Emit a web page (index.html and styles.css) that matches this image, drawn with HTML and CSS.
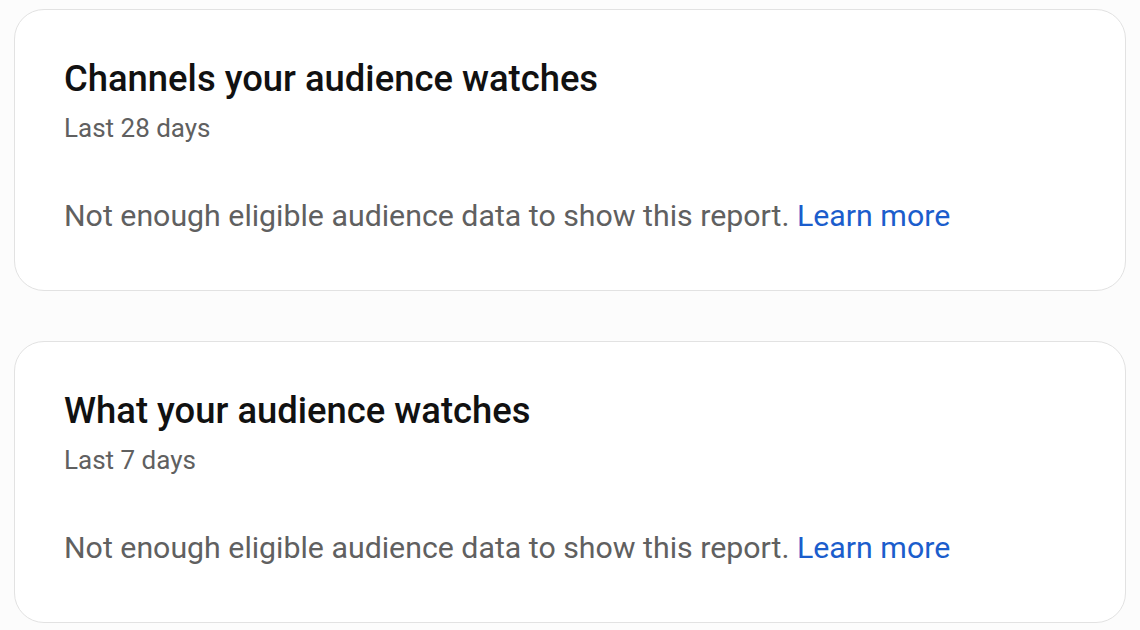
FILE: index.html
```html
<!DOCTYPE html>
<html lang="en">
<head>
<meta charset="utf-8">
<title>Audience reports</title>
<link rel="stylesheet" href="styles.css">
</head>
<body>
<main class="stack">
  <section class="card">
    <h2 class="card-title">Channels your audience watches</h2>
    <div class="card-sub">Last 28 days</div>
    <p class="card-msg">Not enough eligible audience data to show this report. <a class="link" href="#">Learn more</a></p>
  </section>
  <section class="card">
    <h2 class="card-title">What your audience watches</h2>
    <div class="card-sub">Last 7 days</div>
    <p class="card-msg">Not enough eligible audience data to show this report. <a class="link" href="#">Learn more</a></p>
  </section>
</main>
</body>
</html>
```
FILE: styles.css
```css
html, body {
  margin: 0;
  background: #fcfcfc;
}
body {
  font-family: Roboto, "Liberation Sans", Arial, sans-serif;
  padding: 9px 14px 0 14px;
}
.stack {
  display: flex;
  flex-direction: column;
  gap: 50px;
  width: 1112px;
}
.card {
  background: #ffffff;
  border: 1px solid #e2e2e2;
  border-radius: 30px;
  padding: 47px 49px 56px 49px;
}
.card-title {
  margin: 0;
  font-size: 36.4px;
  line-height: 44px;
  font-weight: 500;
  color: #111111;
}
.card-sub {
  margin-top: 11px;
  font-size: 26px;
  line-height: 32px;
  color: #606060;
}
.card-msg {
  margin: 54px 0 0 0;
  font-size: 30.3px;
  line-height: 36px;
  color: #606060;
}
.link {
  color: #1b5dcc;
  text-decoration: none;
}
```
